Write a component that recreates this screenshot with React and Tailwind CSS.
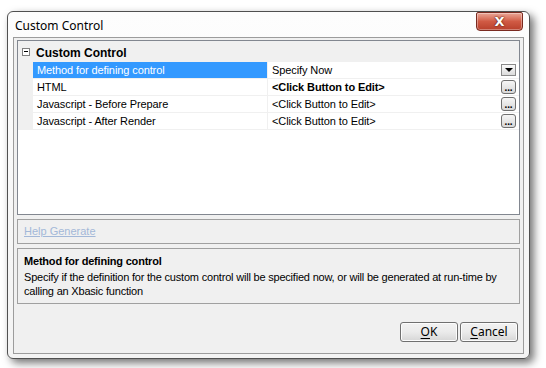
import React from "react";

function ChoiceButton({ kind }) {
  if (kind === "drop") {
    return (
      <div className="flex h-[12px] w-[15px] items-center justify-center border border-[#8a8a8a] bg-gradient-to-b from-[#fafafa] to-[#dcdcdc]">
        <div className="h-0 w-0 border-x-[4px] border-t-[4px] border-x-transparent border-t-black" />
      </div>
    );
  }
  return (
    <div className="flex h-[14px] w-[15px] items-end justify-center rounded-[3px] border border-[#707070] bg-gradient-to-b from-[#f6f6f6] to-[#d8d8d8] pb-[1px]">
      <span className="text-[10px] font-bold leading-[8px] text-black">...</span>
    </div>
  );
}

function Row({ label, value, selected, bold, kind }) {
  return (
    <div className="flex h-[17px] tracking-[-0.1px]">
      <div className="w-[15px] bg-[#f0f0f0]" />
      <div
        className={
          selected
            ? "w-[235px] border-r border-b border-[#f0f0f0] bg-[#3399ff] pl-[4px] leading-[16px] text-white"
            : "w-[235px] border-r border-b border-[#f0f0f0] pl-[4px] leading-[16px] text-black"
        }
      >
        {label}
      </div>
      <div className="flex flex-1 items-center border-b border-[#f0f0f0] pl-[4px] pr-[3px]">
        <span className={bold ? "flex-1 font-bold text-black" : "flex-1 text-black"}>{value}</span>
        <ChoiceButton kind={kind} />
      </div>
    </div>
  );
}

function DialogButton({ letter, rest }) {
  return (
    <button className="flex h-[20px] w-[58px] items-center justify-center rounded-[3px] border border-[#707070] bg-gradient-to-b from-[#f2f2f2] via-[#ebebeb] to-[#d6d6d6] font-['Noto_Sans',sans-serif] text-[12px] leading-none text-black shadow-[inset_0_0_0_1px_#fcfcfc]">
      <span className="underline underline-offset-2">{letter}</span>
      {rest}
    </button>
  );
}

export default function App() {
  return (
    <div className="h-[368px] w-[546px] overflow-hidden bg-white pl-[7px] pt-[11px] font-['Liberation_Sans',Arial,sans-serif] text-[11px]">
      <div className="flex h-[348px] w-[523px] flex-col rounded-[6px] border border-[#505050] bg-gradient-to-b from-[#fdfdfd] to-[#f3f3f3] shadow-[4px_4px_8px_rgba(0,0,0,0.55)]">
        {/* title bar */}
        <div className="flex h-[25px] items-start justify-between pl-[7px] pr-[6px]">
          <span className="pt-[8px] font-['Noto_Sans',sans-serif] text-[12px] leading-none text-black">Custom Control</span>
          <div className="flex h-[19px] w-[47px] items-center justify-center rounded-b-[4px] rounded-t-[2px] border border-[#7a2a20] bg-gradient-to-b from-[#eaa697] via-[#d05a44] to-[#b8402c] shadow-[inset_0_0_0_1px_rgba(255,255,255,0.35)]">
            <span className="font-['DejaVu_Sans',sans-serif] text-[13px] font-bold leading-none text-white [text-shadow:0_0_2px_#5a1a10,0_0_1px_#5a1a10]">X</span>
          </div>
        </div>

        {/* client area */}
        <div className="mx-[5px] mb-[4px] flex flex-1 flex-col border border-[#9c9c9c] bg-[#f0f0f0] px-[3px] pt-[2px]">
          {/* property grid */}
          <div className="h-[175px] border border-[#828790] bg-white">
            <div className="flex h-[21px] items-center bg-[#f0f0f0]">
              <div className="ml-[4px] flex h-[8px] w-[8px] items-center justify-center border border-[#808080] bg-white">
                <div className="h-[1px] w-[4px] bg-black" />
              </div>
              <span className="ml-[6px] pt-[2px] text-[12px] font-bold text-black">Custom Control</span>
            </div>
            <Row label="Method for defining control" value="Specify Now" selected kind="drop" />
            <Row label="HTML" value="<Click Button to Edit>" bold kind="dots" />
            <Row label="Javascript - Before Prepare" value="<Click Button to Edit>" kind="dots" />
            <Row label="Javascript - After Render" value="<Click Button to Edit>" kind="dots" />
          </div>

          {/* help generate */}
          <div className="mt-[4px] flex h-[25px] items-center border border-[#a0a0a0] pl-[6px]">
            <span className="text-[#a3b8d8] underline">Help Generate</span>
          </div>

          {/* description */}
          <div className="mt-[4px] h-[56px] border border-[#a0a0a0] px-[6px] pt-[5px] leading-[14px] tracking-[-0.2px] text-black">
            <div className="font-bold">Method for defining control</div>
            <div className="mt-[2px]">
              Specify if the definition for the custom control will be specified now, or will be generated at run-time by
              calling an Xbasic function
            </div>
          </div>

          {/* buttons */}
          <div className="mt-[18px] flex justify-end gap-[2px] pr-[2px]">
            <DialogButton letter="O" rest="K" />
            <DialogButton letter="C" rest="ancel" />
          </div>
        </div>
      </div>
    </div>
  );
}
